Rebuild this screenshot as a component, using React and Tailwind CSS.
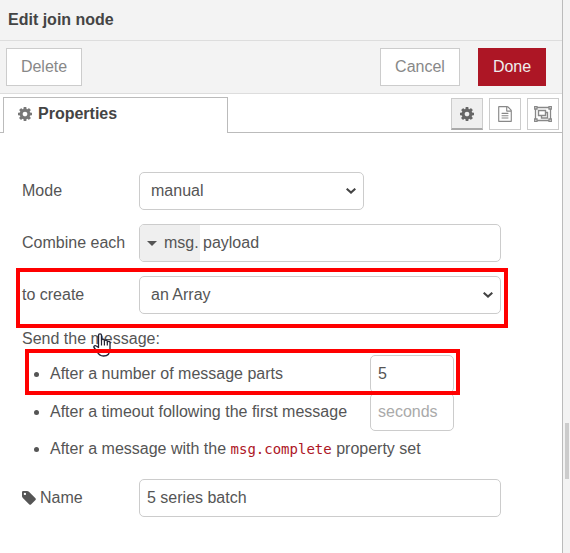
const COG =
  "M1024 896q0-106-75-181t-181-75-181 75-75 181 75 181 181 75 181-75 75-181zm512-109v222q0 12-8 23t-20 13l-185 28q-19 54-39 91 35 50 107 138 10 12 10 25t-9 23q-27 37-99 108t-94 71q-12 0-26-9l-138-108q-44 23-91 38-16 136-29 186-7 28-36 28h-222q-14 0-24.5-8.5t-11.5-21.5l-28-184q-49-16-90-37l-141 107q-10 9-25 9-14 0-25-11-126-114-165-168-7-10-7-23 0-12 8-23 15-21 51-66.5t54-70.5q-27-50-41-99l-183-27q-13-2-21-12.5t-8-23.5v-222q0-12 8-23t19-13l186-28q14-46 39-92-40-57-107-138-10-12-10-24 0-10 9-23 26-36 98.5-107.5t94.5-71.5q13 0 26 10l138 107q44-23 91-38 16-136 29-186 7-28 36-28h222q14 0 24.5 8.5t11.5 21.5l28 184q49 16 90 37l142-107q9-9 24-9 13 0 25 10 129 119 165 170 7 8 7 22 0 12-8 23-15 21-51 66.5t-54 70.5q26 50 41 98l183 28q13 2 21 12.5t8 23.5z";

function CogIcon({ className }) {
  return (
    <svg viewBox="0 128 1536 1536" fill="currentColor" className={className} aria-hidden="true">
      <path d={COG} />
    </svg>
  );
}

function TagIcon({ className }) {
  return (
    <svg viewBox="0 128 1536 1536" fill="currentColor" className={className} aria-hidden="true">
      <path d="M448 448q0-53-37.5-90.5t-90.5-37.5-90.5 37.5-37.5 90.5 37.5 90.5 90.5 37.5 90.5-37.5 37.5-90.5zm1067 576q0 53-37 90l-491 492q-39 37-91 37-53 0-90-37l-715-716q-38-37-64.5-101t-26.5-117v-416q0-52 38-90t90-38h416q53 0 117 26.5t102 64.5l715 714q37 39 37 91z" />
    </svg>
  );
}

function FileIcon({ className }) {
  return (
    <svg viewBox="0 0 1536 1792" fill="currentColor" className={className} aria-hidden="true">
      <path d="M1468 380q28 28 48 76t20 88v1152q0 40-28 68t-68 28h-1344q-40 0-68-28t-28-68v-1600q0-40 28-68t68-28h896q40 0 88 20t76 48zm-444-244v376h376q-10-29-22-41l-313-313q-12-12-41-22zm384 1528v-1024h-416q-40 0-68-28t-28-68v-416h-768v1536h1280zm-1024-864q0-14 9-23t23-9h704q14 0 23 9t9 23v64q0 14-9 23t-23 9h-704q-14 0-23-9t-9-23v-64zm736 224q14 0 23 9t9 23v64q0 14-9 23t-23 9h-704q-14 0-23-9t-9-23v-64q0-14 9-23t23-9h704zm0 256q14 0 23 9t9 23v64q0 14-9 23t-23 9h-704q-14 0-23-9t-9-23v-64q0-14 9-23t23-9h704z" />
    </svg>
  );
}

function GroupIcon({ className }) {
  return (
    <svg viewBox="0 0 18 16" fill="none" stroke="currentColor" className={className} aria-hidden="true">
      <path d="M3 1.500h12M3 14.500h12M1.500 3v10M16.500 3v10" strokeWidth="1.300" />
      <path d="M.7.7h2.300v2.300H.7zM15 .7h2.300v2.300H15zM.7 13h2.300v2.300H.7zM15 13h2.300v2.300H15z" strokeWidth="1.300" />
      <path d="M4.500 4.500h7v5h-7zM11.500 6.500h2v5.500h-6V9.500" strokeWidth="1.400" />
    </svg>
  );
}

function Chevron() {
  return (
    <svg
      viewBox="0 0 10 6"
      className="pointer-events-none absolute right-2 top-1/2 h-[6px] w-[10px] -translate-y-1/2"
      fill="none"
      stroke="#444"
      strokeWidth="2"
      aria-hidden="true"
    >
      <path d="M.7.7 5 4.600 9.300.7" />
    </svg>
  );
}

function HandCursor({ className }) {
  return (
    <svg viewBox="0 0 18 24" className={className} aria-hidden="true">
      <path
        d="M5.500 14.500V2.300a1.500 1.500 0 0 1 3 0V7.500a1.400 1.400 0 0 1 2.900.3v.7a1.400 1.400 0 0 1 2.900.3v.7a1.300 1.300 0 0 1 2.700.5V16c0 4.500-2.500 7-6.500 7-3.500 0-5-1.500-6.500-4.500L1 14.500c-.7-1.600 1.200-2.400 2.300-1.500z"
        fill="#fff"
        stroke="#223"
        strokeWidth="1.300"
        strokeLinejoin="round"
      />
      <path d="M8.500 7.500v5M11.400 8.500v4M14.300 9.500v3" stroke="#223" strokeWidth="1.200" />
    </svg>
  );
}

function Highlight({ className }) {
  return <div className={`pointer-events-none absolute z-20 border-4 border-[#ff0000] ${className}`} />;
}

const field = "h-[38px] rounded-[5px] border border-[#ccc] bg-white outline-none";
const iconButton = "flex h-8 w-8 items-center justify-center border border-[#ccc]";

export default function App() {
  return (
    <div className="flex min-h-screen bg-[#f3f3f3] font-['Liberation_Sans',Arial,sans-serif] text-base text-[#555]">
      <main className="min-w-0 flex-1 border-r border-[#bbb] bg-white">
        <header className="flex h-[41px] items-center border-b border-[#ddd] bg-[#f3f3f3] px-2">
          <h1 className="font-bold text-[#444]">Edit join node</h1>
        </header>

        <div className="flex h-[53px] items-center border-b border-[#ddd] bg-[#f3f3f3] pl-[6px] pr-4">
          <button className="h-[38px] w-[76px] border border-[#ccc] bg-white text-[#888]">Delete</button>
          <button className="ml-auto h-[38px] w-20 border border-[#ccc] bg-white text-[#888]">Cancel</button>
          <button className="ml-[18px] h-[38px] w-[68px] bg-[#ad1625] text-[#eee]">Done</button>
        </div>

        <div className="flex h-[39px]">
          <div className="w-[3px] border-b border-[#bbb]" />
          <button className="mt-[3px] flex w-[225px] items-center gap-[6px] border border-b-0 border-[#bbb] pl-[14px] pb-[3px] font-bold text-[#444]">
            <CogIcon className="h-[14px] w-[14px] text-[#777]" />
            Properties
          </button>
          <div className="flex flex-1 items-start justify-end gap-[6px] border-b border-[#bbb] pr-[3px] pt-1">
            <button className={`${iconButton} border-b-2 border-b-[#aaa] bg-[#efefef] text-[#666]`} aria-label="Properties">
              <CogIcon className="h-[14px] w-[14px]" />
            </button>
            <button className={`${iconButton} text-[#888]`} aria-label="Description">
              <FileIcon className="h-4 w-[14px]" />
            </button>
            <button className={`${iconButton} text-[#888]`} aria-label="Appearance">
              <GroupIcon className="h-4 w-[18px]" />
            </button>
          </div>
        </div>

        <form className="pl-[22px] pr-[61px] pt-[39px]">
          <div className="flex flex-col gap-[14px]">
            <div className="flex items-center">
              <label htmlFor="mode" className="w-[117px]">Mode</label>
              <div className="relative w-[225px]">
                <select id="mode" className={`${field} w-full appearance-none pl-[11px] pr-6`}>
                  <option>manual</option>
                </select>
                <Chevron />
              </div>
            </div>

            <div className="flex items-center">
              <label htmlFor="combine" className="w-[117px]">Combine each</label>
              <div className={`${field} flex min-w-0 flex-1 overflow-hidden`}>
                <button type="button" className="flex w-[60px] items-center gap-[7px] bg-[#efefef] pl-[7px]">
                  <span className="border-x-[5px] border-t-[5px] border-x-transparent border-t-[#555]" />
                  msg.
                </button>
                <input id="combine" defaultValue="payload" className="min-w-0 flex-1 pl-[3px] outline-none" />
              </div>
            </div>

            <div className="relative flex items-center">
              <label htmlFor="create" className="w-[117px]">to create</label>
              <div className="relative min-w-0 flex-1">
                <select id="create" className={`${field} w-full appearance-none pl-[11px] pr-6`}>
                  <option>an Array</option>
                </select>
                <Chevron />
              </div>
              <Highlight className="-bottom-[14px] -left-[6px] -right-[7px] -top-2" />
            </div>
          </div>

          <div className="relative mt-[13px]">
            <p className="leading-6">Send the message:</p>
            <HandCursor className="absolute left-[71px] top-[6px] z-10 h-6 w-[18px]" />
          </div>

          <ul className="mt-1 list-disc pl-7">
            <li className="relative">
              <div className="flex items-center">
                <label htmlFor="count" className="w-[320px]">After a number of message parts</label>
                <input id="count" defaultValue="5" className={`${field} w-[84px] pl-[7px]`} />
              </div>
              <Highlight className="-bottom-[2px] -left-[25px] -top-[6px] w-[435px]" />
            </li>
            <li>
              <div className="flex items-center">
                <label htmlFor="timeout" className="w-[320px]">After a timeout following the first message</label>
                <input id="timeout" placeholder="seconds" className={`${field} w-[84px] pl-[7px] placeholder:text-[#aaa]`} />
              </div>
            </li>
            <li className="mt-[6px] leading-6">
              After a message with the{" "}
              <code className="font-['DejaVu_Sans_Mono',monospace] text-sm text-[#ad1625]">msg.complete</code> property set
            </li>
          </ul>

          <div className="mt-[18px] flex items-center">
            <label htmlFor="name" className="flex w-[117px] items-center gap-1">
              <TagIcon className="h-[14px] w-[14px]" />
              Name
            </label>
            <input id="name" defaultValue="5 series batch" className={`${field} min-w-0 flex-1 pl-[7px]`} />
          </div>
        </form>
      </main>

      <aside className="w-[7px] pl-[2px] pt-[423px]">
        <div className="h-14 w-1 bg-[#ccc]" />
      </aside>
    </div>
  );
}
